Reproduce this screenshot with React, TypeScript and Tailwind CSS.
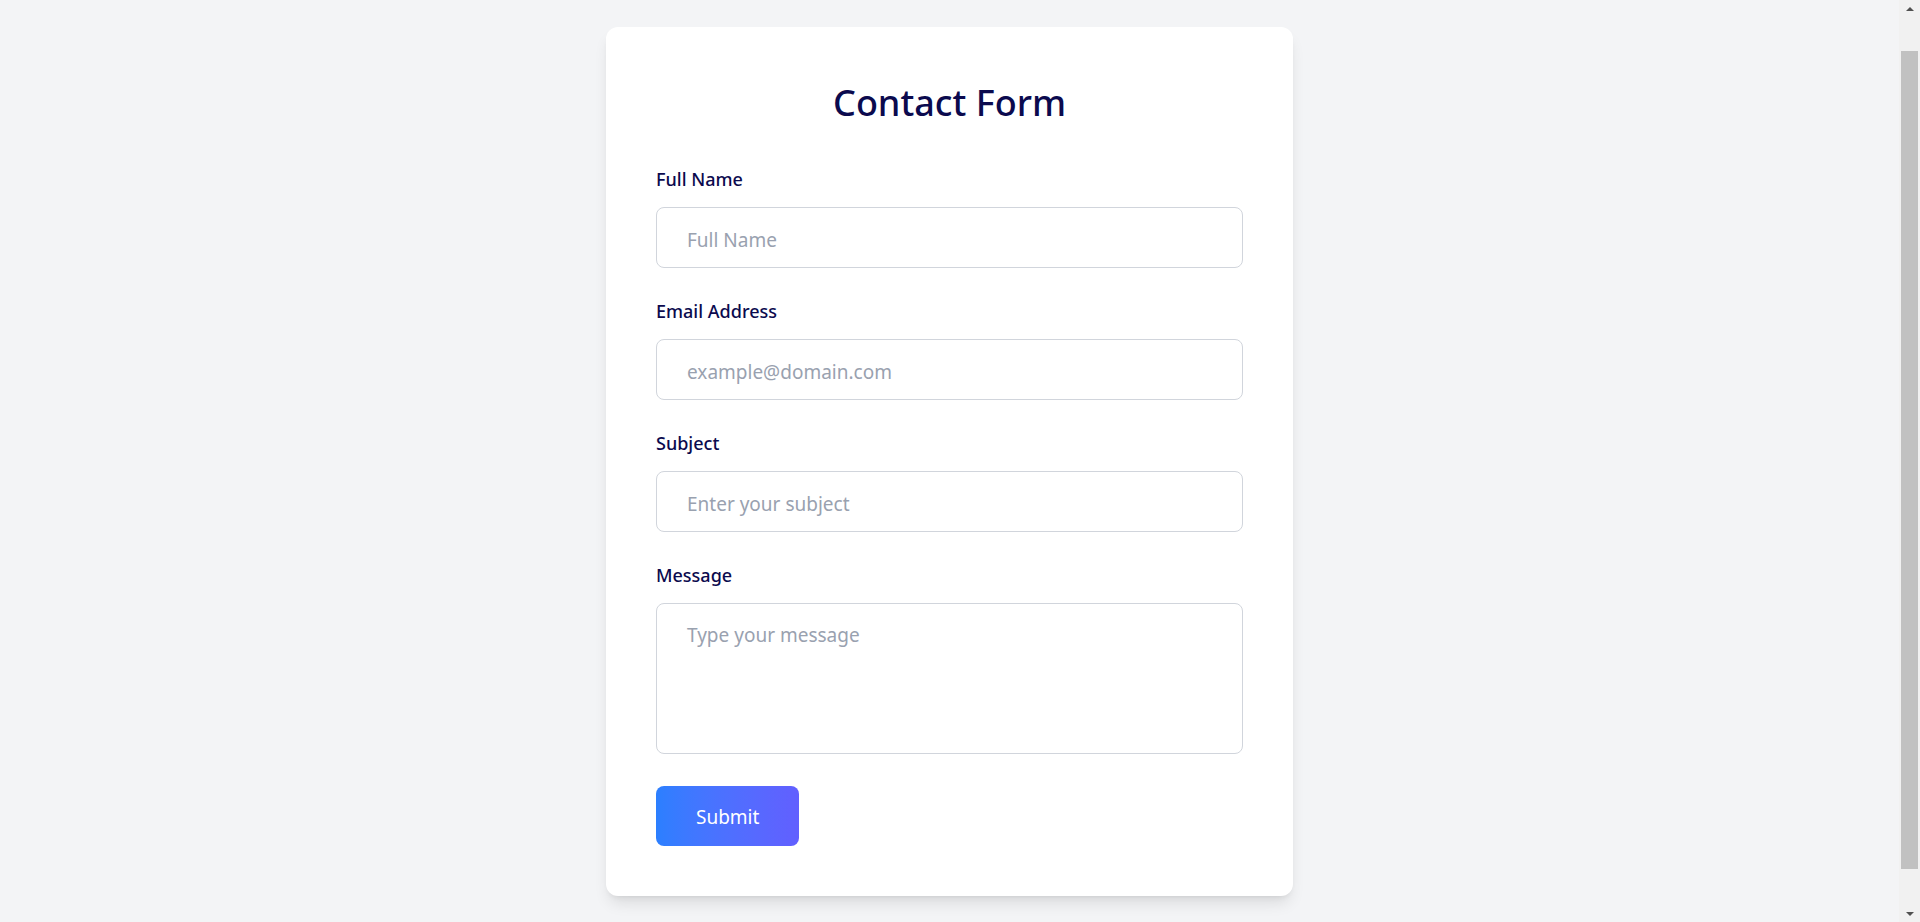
import * as React from 'react';

const FIELDS = [
  {id: 'name', label: 'Full Name', type: 'text', placeholder: 'Full Name'},
  {id: 'email', label: 'Email Address', type: 'email', placeholder: 'example@domain.com'},
  {id: 'subject', label: 'Subject', type: 'text', placeholder: 'Enter your subject'}
];

const inputCls =
  'block w-full rounded-lg border border-gray-300 bg-white px-[30px] text-[19px] leading-[27px] text-[#0b0a4e] placeholder:text-gray-400 outline-none';

// classic windows-style scrollbar, as seen in the screenshot
function Scrollbar() {
  return (
    <div className="fixed top-0 right-0 flex h-screen w-[21px] flex-col bg-[#f1f1f1]">
      <div className="flex h-[17px] items-center justify-center">
        <div className="h-0 w-0 border-x-[4px] border-b-[4px] border-x-transparent border-b-[#505050]" />
      </div>
      <div className="mx-[2px] mt-[34px] h-[818px] bg-[#c1c1c1]" />
      <div className="flex-1" />
      <div className="flex h-[17px] items-center justify-center">
        <div className="h-0 w-0 border-x-[4px] border-t-[4px] border-x-transparent border-t-[#505050]" />
      </div>
    </div>
  );
}

export default function App() {
  React.useEffect(() => {
    window.scrollTo(0, 39);
  }, []);

  return (
    <div className="min-h-screen bg-gray-100 py-[66px] pr-[21px] font-['Noto_Sans',sans-serif]">
      <form
        className="mx-auto w-[687px] rounded-xl bg-white p-[50px] shadow-lg"
        onSubmit={(e) => e.preventDefault()}
      >
        <h1 className="mt-[6px] text-center text-[36px] leading-[40px] font-medium text-[#0b0a4e]">Contact Form</h1>

        <div className="mt-[43px] flex flex-col gap-[30px]">
          {FIELDS.map((f) => (
            <div key={f.id}>
              <label htmlFor={f.id} className="mb-[14px] block text-[18px] leading-[27px] font-medium text-[#0b0a4e]">
                {f.label}
              </label>
              <input
                id={f.id}
                type={f.type}
                placeholder={f.placeholder}
                className={inputCls + ' pt-[19px] pb-[13px]'}
              />
            </div>
          ))}

          <div>
            <label htmlFor="message" className="mb-[14px] block text-[18px] leading-[27px] font-medium text-[#0b0a4e]">
              Message
            </label>
            <textarea
              id="message"
              placeholder="Type your message"
              className={inputCls + ' h-[151px] resize-none pt-[18px] pb-4'}
            />
          </div>
        </div>

        <button
          type="submit"
          className="mt-8 rounded-lg bg-linear-to-r from-blue-500 to-indigo-500 px-10 pt-[17px] pb-[15px] text-[19px] leading-[28px] text-white"
        >
          Submit
        </button>
      </form>
      <Scrollbar />
    </div>
  );
}
